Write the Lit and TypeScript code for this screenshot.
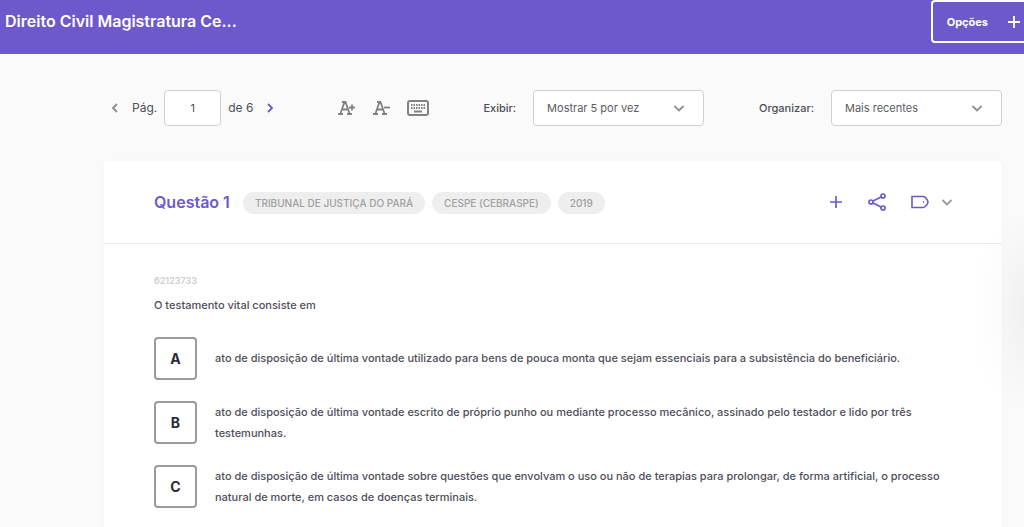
import { LitElement, html, svg, css } from "lit";
import { customElement, property, state } from "lit/decorators.js";

const chevron = (d: string) => html`<svg class="chevron" viewBox="0 0 12 12" width="12" height="12" fill="none" stroke="currentColor" stroke-width="1.800" aria-hidden="true"><path d=${d} /></svg>`;
const LEFT = "M8 2 4 6l4 4";
const RIGHT = "M4 2l4 4-4 4";
const DOWN = "M1.500 4 6 8.500 10.500 4";

const keys = [4, 6.5, 9, 11.5, 14, 16.5].map((x) => svg`<path d="M${x} 5h1.500M${x} 8h1.500" />`);
const letterA = svg`<path stroke-width="1.800" d="M3.500 13.500 7.500 2h1l4 11.500M5 9.500h6M1 14h5M10 14h5M5 2h3" />`;

@customElement("answer-option")
class AnswerOption extends LitElement {
  @property() letter = "";
  @property() text = "";

  static styles = css`
    :host { display: block; }
    .option { display: flex; align-items: center; gap: 18px; min-height: 43px; }
    .letter {
      flex: none; box-sizing: border-box; width: 43px; height: 43px; padding: 0;
      border: 2px solid #9b9b9b; border-radius: 4px; background: #fff;
      color: #2b2b3a; font: 700 14px Inter, "Open Sans", sans-serif;
    }
    .text { margin: 0; font-size: 11px; line-height: 21px; font-weight: 500; }
  `;

  render() {
    return html`<div class="option">
      <button class="letter" aria-describedby="answer">${this.letter}</button>
      <p class="text" id="answer">${this.text}</p>
    </div>`;
  }
}

@customElement("app-root")
class AppRoot extends LitElement {
  @state() tags = ["TRIBUNAL DE JUSTIÇA DO PARÁ", "CESPE (CEBRASPE)", "2019"];
  @state() answers = [
    ["A", "ato de disposição de última vontade utilizado para bens de pouca monta que sejam essenciais para a subsistência do beneficiário."],
    ["B", "ato de disposição de última vontade escrito de próprio punho ou mediante processo mecânico, assinado pelo testador e lido por três testemunhas."],
    ["C", "ato de disposição de última vontade sobre questões que envolvam o uso ou não de terapias para prolongar, de forma artificial, o processo natural de morte, em casos de doenças terminais."],
  ];

  static styles = css`
    :host {
      display: block; min-height: 100vh; overflow: hidden; background: #fafafa;
      color: #4e4e58; font: 12px/20px Inter, "Open Sans", sans-serif;
    }
    button { padding: 0; border: 0; background: none; color: inherit; font: inherit; cursor: pointer; }
    svg { display: block; }
    .header {
      display: flex; align-items: flex-start; justify-content: space-between;
      height: 54px; padding-left: 5px; background: #6e59cc; color: #fff; overflow: hidden;
    }
    .title { margin: 0; font-size: 16px; line-height: 43px; font-weight: 600; }
    .header .options {
      display: flex; align-items: center; gap: 19px; box-sizing: border-box; height: 43px;
      margin-right: -13px; padding: 0 14px; border: 2px solid #fff; border-radius: 4px;
      font-size: 11px; font-weight: 700;
    }
    .toolbar { display: flex; align-items: center; height: 36px; margin: 36px 22px 0 109px; }
    .pager { display: flex; align-items: center; gap: 7px; }
    .prev { color: #8c8c8c; }
    .next { margin-left: 4px; color: #6e59cc; }
    .page {
      box-sizing: border-box; width: 57px; height: 36px; border: 1px solid #d0d0d0;
      border-radius: 4px; background: #fff; text-align: center; color: inherit; font: inherit; font-size: 11px;
    }
    .pager label { display: flex; align-items: center; gap: 7px; margin-left: 4px; }
    .view { display: flex; align-items: center; gap: 16px; margin-left: 61px; color: #828282; }
    .field { display: flex; align-items: center; gap: 17px; font-size: 11px; }
    .field label { font-weight: 500; }
    .show { margin-left: 54px; }
    .sort { margin-left: auto; }
    .select { display: grid; align-items: center; width: 171px; color: #909090; }
    .select select {
      grid-area: 1 / 1; appearance: none; box-sizing: border-box; width: 100%; height: 36px;
      padding: 0 13px; border: 1px solid #d0d0d0; border-radius: 4px; background: #fff;
      color: #5c5c62; font: inherit;
    }
    .select .chevron { grid-area: 1 / 1; justify-self: end; margin-right: 19px; pointer-events: none; }
    .card {
      margin: 35px 22px 0 104px; border-radius: 4px; background: #fff;
      box-shadow: 0 0 10px rgba(0, 0, 0, 0.02);
    }
    .card-head {
      display: flex; align-items: center; height: 82px; padding: 0 49px 0 50px;
      border-bottom: 1px solid #ececec;
    }
    .card-title { margin: 0; color: #6e59cc; font-size: 16px; font-weight: 600; }
    .tags { display: flex; gap: 7px; margin: 1px 0 0 13px; padding: 0; list-style: none; }
    .tag {
      padding: 0 12px; border-radius: 12px; background: #eee; color: #a0a0a0;
      font-size: 10px; line-height: 22px; font-weight: 500;
    }
    .actions { display: flex; align-items: center; gap: 25px; margin-left: auto; color: #6e59cc; }
    .label { display: flex; align-items: center; gap: 12px; }
    .label .chevron { color: #999; }
    .card-body { padding: 27px 50px 40px; }
    .code { margin: 0; color: #cdcdcd; font-size: 9px; font-weight: 600; }
    .question { margin: 4px 0 22px; font-size: 11px; font-weight: 500; }
    .answers { display: grid; gap: 21px; }
    .edge {
      position: fixed; top: 250px; left: 100%; width: 40px; height: 120px;
      box-shadow: 0 0 60px rgba(0, 0, 0, 0.09); pointer-events: none;
    }
  `;

  select(id: string, label: string, options: string[], kind: string) {
    return html`<div class="field ${kind}">
      <label for=${id}>${label}</label>
      <div class="select">
        <select id=${id}>${options.map((o) => html`<option>${o}</option>`)}</select>
        ${chevron(DOWN)}
      </div>
    </div>`;
  }

  render() {
    return html`
      <header class="header">
        <h1 class="title">Direito Civil Magistratura Ce...</h1>
        <button class="options">Opções
          <svg width="14" height="14" viewBox="0 0 14 14" fill="none" stroke="currentColor" stroke-width="1.800" aria-hidden="true"><path d="M7 1v12M1 7h12" /></svg>
        </button>
      </header>
      <main>
        <div class="toolbar">
          <nav class="pager" aria-label="Páginas">
            <button class="prev" aria-label="Página anterior">${chevron(LEFT)}</button>
            <label>Pág. <input class="page" value="1" /></label>
            <span>de 6</span>
            <button class="next" aria-label="Próxima página">${chevron(RIGHT)}</button>
          </nav>
          <div class="view">
            <button aria-label="Aumentar texto">
              <svg width="19" height="16" viewBox="0 0 19 16" fill="none" stroke="currentColor" aria-hidden="true">${letterA}<path stroke-width="1.800" d="M12 7.500h6M15 4.500v6" /></svg>
            </button>
            <button aria-label="Diminuir texto">
              <svg width="19" height="16" viewBox="0 0 19 16" fill="none" stroke="currentColor" aria-hidden="true">${letterA}<path stroke-width="1.800" d="M12 7.500h6" /></svg>
            </button>
            <button aria-label="Atalhos do teclado">
              <svg width="22" height="16" viewBox="0 0 22 16" fill="none" stroke="currentColor" stroke-width="2" aria-hidden="true"><rect x="1" y="1" width="20" height="14" rx="2" />${keys}<path d="M7 11.500h8" /></svg>
            </button>
          </div>
          ${this.select("show", "Exibir:", ["Mostrar 5 por vez"], "show")}
          ${this.select("sort", "Organizar:", ["Mais recentes"], "sort")}
        </div>
        <article class="card">
          <header class="card-head">
            <h2 class="card-title">Questão 1</h2>
            <ul class="tags">${this.tags.map((t) => html`<li class="tag">${t}</li>`)}</ul>
            <div class="actions">
              <button aria-label="Adicionar">
                <svg width="14" height="14" viewBox="0 0 14 14" fill="none" stroke="currentColor" stroke-width="1.700" aria-hidden="true"><path d="M7 1v12M1 7h12" /></svg>
              </button>
              <button aria-label="Compartilhar">
                <svg width="18" height="18" viewBox="0 0 18 18" fill="none" stroke="currentColor" stroke-width="1.700" aria-hidden="true"><circle cx="3" cy="9" r="2" /><circle cx="15" cy="3" r="2" /><circle cx="15" cy="15" r="2" /><path d="M5 8l8-4M5 10l8 4" /></svg>
              </button>
              <button class="label" aria-label="Etiquetas">
                <svg width="18" height="14" viewBox="0 0 18 14" fill="none" stroke="currentColor" stroke-width="1.600" aria-hidden="true"><path d="M1 1.500h11c2.500 0 5 4 5 5.500s-2.500 5.500-5 5.500H1z" /><circle cx="12.500" cy="7" r=".5" stroke-width="1" /></svg>
                ${chevron(DOWN)}
              </button>
            </div>
          </header>
          <div class="card-body">
            <p class="code">62123733</p>
            <p class="question">O testamento vital consiste em</p>
            <div class="answers">
              ${this.answers.map(([l, t]) => html`<answer-option .letter=${l} .text=${t}></answer-option>`)}
            </div>
          </div>
        </article>
      </main>
      <div class="edge"></div>
    `;
  }
}
